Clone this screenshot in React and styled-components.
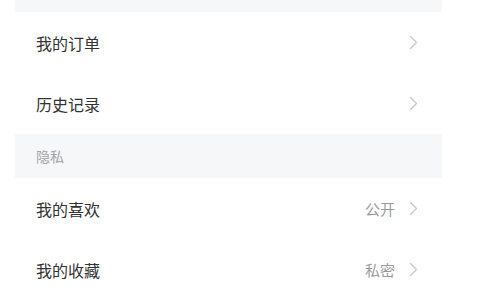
import styled, { createGlobalStyle } from 'styled-components';

const GlobalStyle = createGlobalStyle`
    html, body {
        margin: 0;
        padding: 0;
        background: #ffffff;
        font-family: "Noto Sans CJK SC", "Noto Sans", sans-serif;
    }
`

const sections = [
    {
        id: 'top',
        title: '',
        items: [
            { id: 'orders', text: '我的订单' },
            { id: 'history', text: '历史记录' },
        ],
    },
    {
        id: 'privacy',
        title: '隐私',
        items: [
            { id: 'likes', text: '我的喜欢', value: '公开' },
            { id: 'favorites', text: '我的收藏', value: '私密' },
        ],
    },
]

const Chevron = () => (
    <svg width="9" height="15" viewBox="0 0 9 15" fill="none">
        <path d="M1.5 1.5 L7.5 7.5 L1.5 13.5" stroke="#c9c9cc" strokeWidth="1.3" strokeLinecap="round" strokeLinejoin="round" />
    </svg>
)

const App = () => {
    return (
        <>
            <GlobalStyle />
            <Page>
                {sections.map(({ id, title, items }) => (
                    <Section key={id}>
                        <SectionHeader $compact={!title}>{title}</SectionHeader>
                        {items.map(({ id, text, value }) => (
                            <Row key={id}>
                                <Label>{text}</Label>
                                <Extra>
                                    {value && <Value>{value}</Value>}
                                    <Chevron />
                                </Extra>
                            </Row>
                        ))}
                    </Section>
                ))}
            </Page>
        </>
    )
}

const Page = styled.div`
    width: 427px;
    margin-left: 15px;
    display: flex;
    flex-direction: column;
`

const Section = styled.div`
    display: flex;
    flex-direction: column;
`

const SectionHeader = styled.div`
    height: ${({ $compact }) => ($compact ? '12px' : '44px')};
    background: #f6f7f9;
    display: flex;
    align-items: center;
    padding-left: 21px;
    font-size: 14px;
    color: #a3a5aa;
`

const Row = styled.div`
    height: 61px;
    display: flex;
    align-items: center;
    justify-content: space-between;
    padding: 0 24px 0 21px;
    background: #ffffff;
`

const Label = styled.span`
    font-size: 16px;
    color: #333333;
`

const Extra = styled.div`
    display: flex;
    align-items: center;
    gap: 14px;
`

const Value = styled.span`
    font-size: 15px;
    color: #9a9a9e;
`

export default App
